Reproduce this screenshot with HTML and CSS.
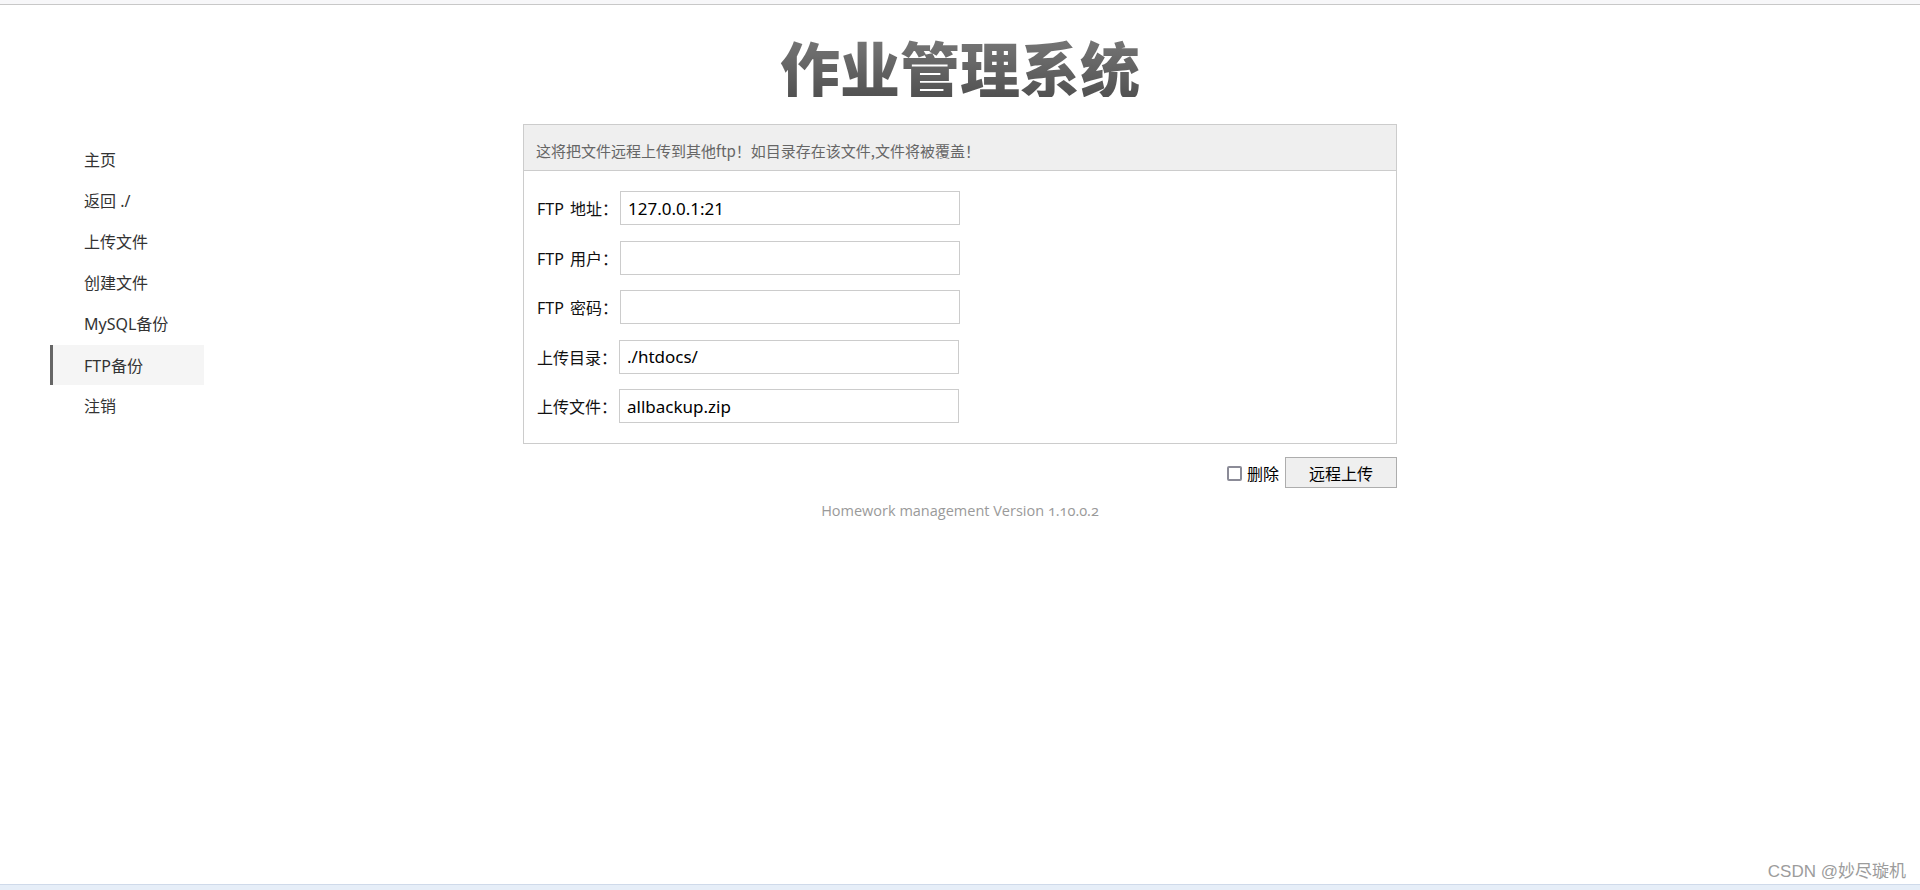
FILE: index.html
```html
<!DOCTYPE html>
<html lang="zh-CN">
<head>
<meta charset="utf-8">
<title>作业管理系统</title>
<link rel="stylesheet" href="styles.css">
</head>
<body>
<div class="topbar"></div>
<h1 class="title">作业管理系统</h1>
<div class="layout">
  <nav class="sidebar">
    <a class="nav-item" href="#">主页</a>
    <a class="nav-item" href="#">返回 ./</a>
    <a class="nav-item" href="#">上传文件</a>
    <a class="nav-item" href="#">创建文件</a>
    <a class="nav-item" href="#">MySQL备份</a>
    <a class="nav-item active" href="#">FTP备份</a>
    <a class="nav-item" href="#">注销</a>
  </nav>
  <main class="content">
    <div class="panel">
      <div class="panel-head">这将把文件远程上传到其他ftp！如目录存在该文件,文件将被覆盖！</div>
      <div class="panel-body">
        <div class="row"><span class="label">FTP 地址：</span><input class="field" type="text" value="127.0.0.1:21"></div>
        <div class="row"><span class="label">FTP 用户：</span><input class="field" type="text" value=""></div>
        <div class="row"><span class="label">FTP 密码：</span><input class="field" type="password" value=""></div>
        <div class="row"><span class="label">上传目录：</span><input class="field" type="text" value="./htdocs/"></div>
        <div class="row"><span class="label">上传文件：</span><input class="field" type="text" value="allbackup.zip"></div>
      </div>
    </div>
    <div class="actions">
      <label class="check"><input class="checkbox" type="checkbox">删除</label>
      <button class="btn" type="button">远程上传</button>
    </div>
    <p class="footer">Homework management Version 1.10.0.2</p>
  </main>
  <div class="spacer"></div>
</div>
<div class="watermark">CSDN @妙尽璇机</div>
<div class="bottombar"></div>
</body>
</html>
```

FILE: styles.css
```css
html, body {
  margin: 0;
  padding: 0;
  height: 100%;
}
body {
  position: relative;
  background: #fff;
  font-family: "Noto Sans", "Noto Sans CJK SC", sans-serif;
  color: #333;
  overflow: hidden;
}
.topbar {
  height: 4px;
  background: #f7f7f9;
  border-bottom: 1px solid #c8c8c8;
}
.title {
  margin: 32px 0 27px;
  text-align: center;
  font-family: "Noto Sans CJK SC", sans-serif;
  font-weight: 900;
  font-size: 60px;
  line-height: 60px;
  background: linear-gradient(#777777, #515151);
  -webkit-background-clip: text;
  background-clip: text;
  color: transparent;
}
.layout {
  display: grid;
  grid-template-columns: 1fr 874px 1fr;
}
.sidebar {
  display: flex;
  flex-direction: column;
  padding-left: 50px;
  margin-top: 16px;
}
.nav-item {
  display: block;
  width: 120px;
  height: 41px;
  line-height: 41px;
  padding-left: 31px;
  border-left: 3px solid transparent;
  font-size: 16px;
  color: #333;
  text-decoration: none;
}
.nav-item.active {
  background: #f5f5f5;
  border-left-color: #666;
  height: 40px;
  line-height: 42px;
  margin-bottom: 1px;
}
.panel {
  border: 1px solid #cccccc;
}
.panel-head {
  background: #efefef;
  border-bottom: 1px solid #cccccc;
  padding: 7px 12px 0;
  height: 38px;
  line-height: 38px;
  font-size: 15px;
  color: #666;
  font-family: "Noto Sans CJK SC", sans-serif;
}
.panel-body {
  padding: 20px 13px 20px;
  display: flex;
  flex-direction: column;
  gap: 15.5px;
}
.row {
  display: flex;
  align-items: center;
  gap: 2px;
  height: 34px;
}
.label {
  font-size: 16px;
  color: #111;
  white-space: pre;
  word-spacing: 2px;
}
.field {
  box-sizing: border-box;
  width: 340px;
  height: 34px;
  margin: 0;
  padding: 0 7px;
  border: 1px solid #cccccc;
  border-radius: 0;
  outline: none;
  background: #fff;
  font-family: "Noto Sans", sans-serif;
  font-size: 17px;
  color: #000;
}
.actions {
  display: flex;
  justify-content: flex-end;
  align-items: center;
  margin-top: 13px;
}
.check {
  display: flex;
  align-items: center;
  gap: 5px;
  font-size: 16px;
  color: #000;
}
.checkbox {
  -webkit-appearance: none;
  appearance: none;
  box-sizing: border-box;
  width: 15px;
  height: 15px;
  margin: 1px 0 0;
  border: 2px solid #8b8b97;
  border-radius: 2px;
  background: #fff;
}
.btn {
  box-sizing: border-box;
  width: 112px;
  height: 31px;
  margin-left: 6px;
  padding: 0;
  border: 1px solid #adadad;
  border-radius: 0;
  background: #efefef;
  font-family: "Noto Sans CJK SC", sans-serif;
  font-size: 16px;
  color: #000;
}
.footer {
  margin: 13px 0 0;
  text-align: center;
  font-family: "Open Sans", sans-serif;
  font-size: 14.5px;
  line-height: 20px;
  color: #9a9a9a;
  font-variant-numeric: oldstyle-nums;
}
.watermark {
  position: absolute;
  right: 14px;
  bottom: 8px;
  font-family: "Liberation Sans", "Noto Sans CJK SC", sans-serif;
  font-size: 17px;
  color: #9c9c9c;
}
.bottombar {
  position: absolute;
  left: 0;
  right: 0;
  bottom: 0;
  height: 5px;
  background: #e6eef8;
  border-top: 1px solid #cfdaea;
}
```
